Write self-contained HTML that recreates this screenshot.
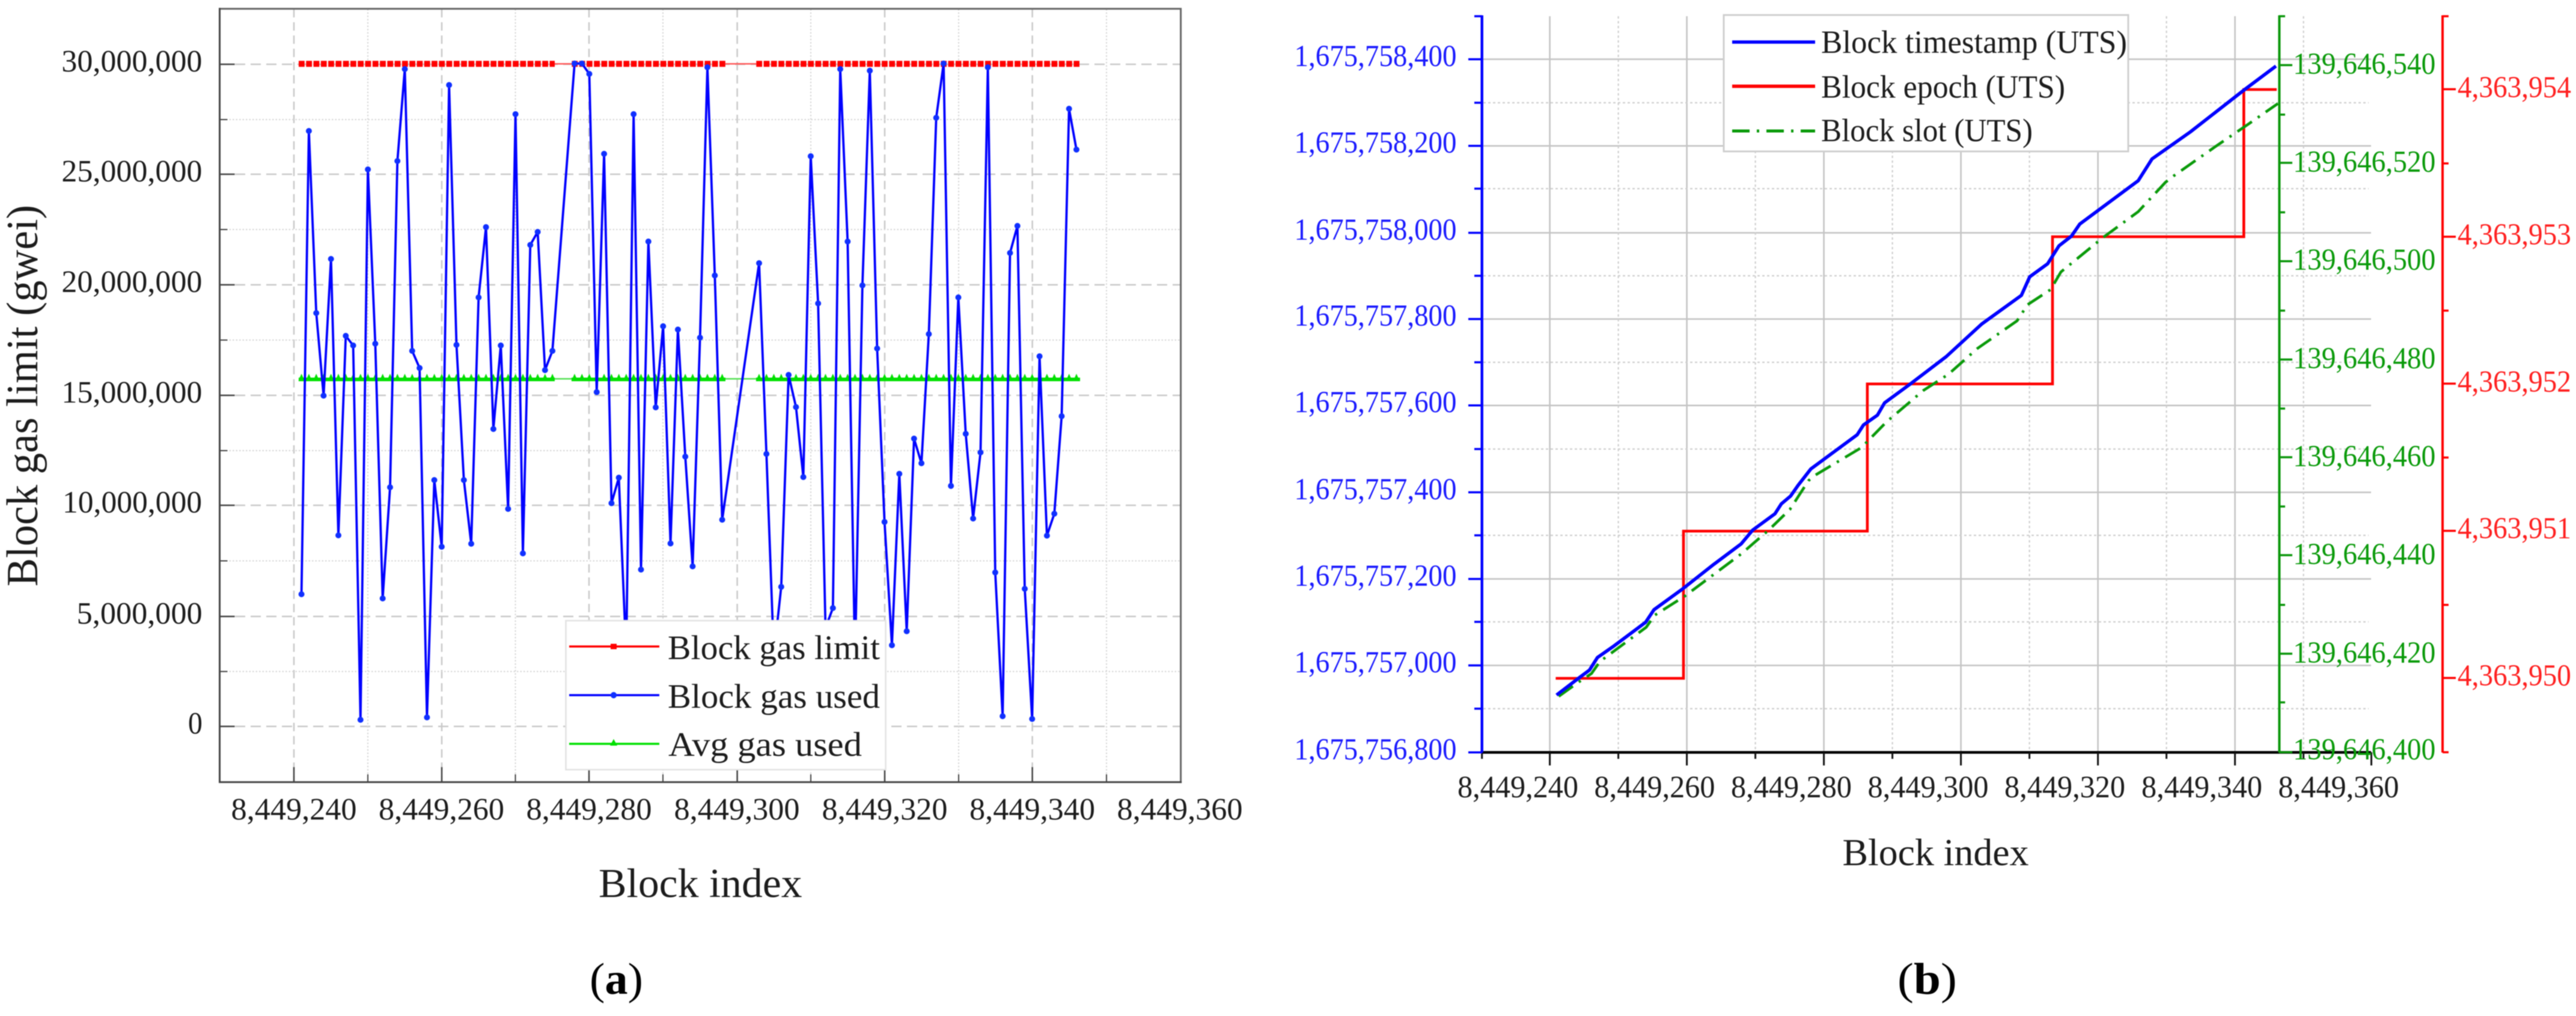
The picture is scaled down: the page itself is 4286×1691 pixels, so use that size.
<!DOCTYPE html>
<html><head><meta charset="utf-8"><title>Block charts</title>
<style>
html,body{margin:0;padding:0;background:#fff;width:4286px;height:1691px;overflow:hidden}
svg{display:block;filter:blur(.7px)}
text{font-family:"Liberation Serif",serif;fill:#1c1c1c}
.yl,.xl{font-size:52px}
.lg{font-size:57px}
.b{fill:#1a1aff;font-size:51px}
.g{fill:#0a9a0a;font-size:51px}
.r{fill:#ff2020;font-size:51px}
.xr{font-size:52px}
.lr{font-size:54px}
</style></head><body>
<svg xmlns="http://www.w3.org/2000/svg" width="4286" height="1691" viewBox="0 0 4286 1691">
<defs>
<marker id="d" markerWidth="12" markerHeight="12" refX="6" refY="6" markerUnits="userSpaceOnUse"><circle cx="6" cy="6" r="5" fill="#1030ff"/></marker>
<pattern id="tri" patternUnits="userSpaceOnUse" x="495.46" y="622" width="12.28" height="12"><polygon points="6.14,0 11.5,12 0.8,12" fill="#00e000"/></pattern>
</defs>

<!-- LEFT PLOT grid -->
<g stroke="#c9c9c9" stroke-width="2.5" stroke-dasharray="17 9" fill="none">
<path d="M365 107H1964M365 290H1964M365 474H1964M365 658H1964M365 841H1964M365 1026H1964M365 1209H1964"/>
</g>
<g stroke="#c9c9c9" stroke-width="2.5" stroke-dasharray="14 8" fill="none">
<path d="M489 15V1301M735 15V1301M980 15V1301M1226.6 15V1301M1472 15V1301M1717.6 15V1301"/>
</g>
<g stroke="#d6d6d6" stroke-width="2" stroke-dasharray="2.5 3" fill="none">
<path d="M365 199H1964M365 382H1964M365 566H1964M365 750H1964M365 933.5H1964M365 1117.6H1964"/>
<path d="M612 15V1301M857.5 15V1301M1103 15V1301M1349 15V1301M1595 15V1301M1841 15V1301"/>
</g>
<!-- frame -->
<g fill="none" stroke-linecap="square">
<path d="M365.5 14.6H1964.6V1301.7" stroke="#666" stroke-width="3"/>
<path d="M365.5 14.6V1301.7H1964.6" stroke="#444" stroke-width="3"/>
<path d="M365.5 107h25M365.5 290h25M365.5 474h25M365.5 658h25M365.5 841h25M365.5 1026h25M365.5 1209h25M489 1301.7v-25M735 1301.7v-25M980 1301.7v-25M1226.6 1301.7v-25M1472 1301.7v-25M1717.6 1301.7v-25" stroke="#444" stroke-width="2.5" stroke-linecap="butt"/>
<path d="M365.5 199h13M365.5 382h13M365.5 566h13M365.5 750h13M365.5 933.5h13M365.5 1117.6h13M612 1301.7v-13M857.5 1301.7v-13M1103 1301.7v-13M1349 1301.7v-13M1595 1301.7v-13M1841 1301.7v-13" stroke="#444" stroke-width="2" stroke-linecap="butt"/>
</g>
<!-- red series -->
<path d="M923 106.3H951M1207 106.3H1258" stroke="#ff5a5a" stroke-width="2.5" fill="none"/>
<g stroke="#ff0000" stroke-width="10" fill="none" stroke-dasharray="9.8 2.48">
<path d="M497 106.3H923"/>
<path d="M951.4 106.3H1207"/>
<path d="M1258.3 106.3H1796"/>
</g>
<!-- green series -->
<path d="M923 630.5H951M1207 630.5H1258" stroke="#55e055" stroke-width="2.5" fill="none"/>
<path d="M497 631.5H923M951 631.5H1207M1258 631.5H1797" stroke="#00e000" stroke-width="6" fill="none"/>
<rect x="496.7" y="622" width="426.3" height="12" fill="url(#tri)"/>
<rect x="950.4" y="622" width="256.6" height="12" fill="url(#tri)"/>
<rect x="1257" y="622" width="540" height="12" fill="url(#tri)"/>
<!-- blue series -->
<polyline fill="none" stroke="#0000ff" stroke-width="3.8" stroke-linejoin="round" marker-start="url(#d)" marker-mid="url(#d)" marker-end="url(#d)" points="501.6,989 513.9,218 526.2,521 538.4,658.5 550.7,431 563,891 575.3,559 587.6,575 599.8,1198 612.1,282 624.4,572 636.7,996 649,811 661.2,268 673.5,115 685.8,584 698.1,612.5 710.4,1194 722.6,799 734.9,910 747.2,141.5 759.5,574 771.8,799 784,905 796.3,495 808.6,378 820.9,714 833.2,575 845.4,847 857.7,190 870,921 882.3,407.6 894.6,386 906.8,616 919.1,584 956,105.7 968.2,105.7 980.5,123 992.8,652.6 1005.1,256 1017.4,837.5 1029.6,795 1041.9,1090 1054.2,190 1066.5,948 1078.8,402 1091,678 1103.3,543 1115.6,904.5 1127.9,548.5 1140.2,760 1152.4,942.6 1164.7,562 1177,112 1189.3,458.5 1201.6,865 1263,438 1275.2,755.5 1287.5,1090 1299.8,976.7 1312.1,624 1324.4,677.5 1336.6,794 1348.9,260 1361.2,505 1373.5,1045 1385.8,1012 1398,115 1410.3,402 1422.6,1100 1434.9,475 1447.2,117.6 1459.4,580 1471.7,868.7 1484,1073.9 1496.3,788.6 1508.6,1050.6 1520.8,730 1533.1,771 1545.4,556 1557.7,196 1570,105.7 1582.2,808.7 1594.5,495 1606.8,722 1619.1,863 1631.4,753 1643.6,112 1655.9,952.8 1668.2,1192 1680.5,421 1692.8,376 1705,980 1717.3,1196.6 1729.6,593 1741.9,891.5 1754.2,855 1766.4,692.7 1778.7,181 1791,249"/>
<!-- left legend -->
<rect x="941.5" y="1033" width="532" height="248" fill="#fff" stroke="#e2e2e2" stroke-width="2.5"/>
<path d="M947 1076H1097" stroke="#ff0000" stroke-width="3.5"/><rect x="1016" y="1071.5" width="10" height="9" fill="#ff0000"/>
<path d="M947 1157H1097" stroke="#0000ff" stroke-width="3.5"/><circle cx="1021" cy="1157" r="5.2" fill="#1030ff"/>
<path d="M947 1238H1097" stroke="#00e000" stroke-width="3.5"/><polygon points="1021,1230 1027,1241 1015,1241" fill="#00e000"/>
<text class="lg" x="1111" y="1097" textLength="353" lengthAdjust="spacingAndGlyphs">Block gas limit</text>
<text class="lg" x="1111" y="1178" textLength="353" lengthAdjust="spacingAndGlyphs">Block gas used</text>
<text class="lg" x="1112" y="1258" textLength="322" lengthAdjust="spacingAndGlyphs">Avg gas used</text>
<!-- left labels -->
<text class="yl" x="102.4" y="119" textLength="234" lengthAdjust="spacingAndGlyphs">30,000,000</text>
<text class="yl" x="102.4" y="302" textLength="234" lengthAdjust="spacingAndGlyphs">25,000,000</text>
<text class="yl" x="102.4" y="486" textLength="234" lengthAdjust="spacingAndGlyphs">20,000,000</text>
<text class="yl" x="102.4" y="670" textLength="234" lengthAdjust="spacingAndGlyphs">15,000,000</text>
<text class="yl" x="104" y="853" textLength="232" lengthAdjust="spacingAndGlyphs">10,000,000</text>
<text class="yl" x="127.7" y="1038" textLength="209" lengthAdjust="spacingAndGlyphs">5,000,000</text>
<text class="yl" x="312.9" y="1221" textLength="24" lengthAdjust="spacingAndGlyphs">0</text>
<text class="xl" x="384.5" y="1364" textLength="209" lengthAdjust="spacingAndGlyphs">8,449,240</text>
<text class="xl" x="630" y="1364" textLength="209" lengthAdjust="spacingAndGlyphs">8,449,260</text>
<text class="xl" x="875.5" y="1364" textLength="209" lengthAdjust="spacingAndGlyphs">8,449,280</text>
<text class="xl" x="1121.5" y="1364" textLength="209" lengthAdjust="spacingAndGlyphs">8,449,300</text>
<text class="xl" x="1367.5" y="1364" textLength="209" lengthAdjust="spacingAndGlyphs">8,449,320</text>
<text class="xl" x="1613" y="1364" textLength="209" lengthAdjust="spacingAndGlyphs">8,449,340</text>
<text class="xl" x="1858.5" y="1364" textLength="209" lengthAdjust="spacingAndGlyphs">8,449,360</text>
<text x="996" y="1493" font-size="69" textLength="338.6" lengthAdjust="spacingAndGlyphs">Block index</text>
<text transform="translate(62 976) rotate(-90)" font-size="74" textLength="635" lengthAdjust="spacingAndGlyphs">Block gas limit (gwei)</text>
<text x="981" y="1654" font-size="74" textLength="89" lengthAdjust="spacingAndGlyphs" style="fill:#000">(<tspan font-weight="bold" style="fill:#000">a</tspan>)</text>

<!-- RIGHT PLOT grid -->
<g stroke="#c4c4c4" stroke-width="2.6" fill="none">
<path d="M2466 98.6H3945M2466 242.8H3945M2466 387.5H3945M2466 531H3945M2466 674.8H3945M2466 819.4H3945M2466 963.6H3945M2466 1107.5H3945"/>
<path d="M2578.6 27V1252M2806.6 27V1252M3034.6 27V1252M3262.6 27V1252M3490.6 27V1252M3718.6 27V1252"/>
</g>
<g stroke="#cfcfcf" stroke-width="2.2" stroke-dasharray="4 4" fill="none">
<path d="M2468 171H3941M2468 314H3941M2468 459H3941M2468 603H3941M2468 747.4H3941M2468 891H3941M2468 1035H3941M2468 1179.5H3941"/>
<path d="M2692.6 27V1252M2920.6 27V1252M3148.6 27V1252M3376.6 27V1252M3604.6 27V1252M3832.6 27V1252"/>
</g>
<!-- black x axis -->
<path d="M2465 1252.3H3945" stroke="#000" stroke-width="4.5"/>
<path d="M2578.6 1252v22M2806.6 1252v22M3034.6 1252v22M3262.6 1252v22M3490.6 1252v22M3718.6 1252v22M3945.5 1252v22" stroke="#111" stroke-width="3"/>
<path d="M2465.7 1252v11M2692.6 1252v11M2920.6 1252v11M3148.6 1252v11M3376.6 1252v11M3604.6 1252v11M3832.6 1252v11" stroke="#111" stroke-width="3"/>
<!-- blue axis -->
<path d="M2465.7 25.5V1252.5" stroke="#0000ff" stroke-width="4.5" fill="none"/>
<path d="M2443 98.6h23M2443 242.8h23M2443 387.5h23M2443 531h23M2443 674.8h23M2443 819.4h23M2443 963.6h23M2443 1107.5h23M2443 1252.3h23" stroke="#0000ff" stroke-width="3.5"/>
<path d="M2453 27h13M2453 171h13M2453 314h13M2453 459h13M2453 603h13M2453 747.4h13M2453 891h13M2453 1035h13M2453 1179.5h13" stroke="#0000ff" stroke-width="3.5"/>
<!-- green axis -->
<path d="M3792.4 25.5V1252.5" stroke="#0a960a" stroke-width="4" fill="none"/>
<path d="M3792 108.4h22M3792 271h22M3792 434.7h22M3792 598.4h22M3792 761h22M3792 924h22M3792 1088h22M3792 1252h22" stroke="#0a960a" stroke-width="3.5"/>
<path d="M3792 27h10M3792 190.8h10M3792 353.4h10M3792 517h10M3792 680h10M3792 843h10M3792 1006.8h10M3792 1169h10" stroke="#0a960a" stroke-width="3.5"/>
<!-- red axis -->
<path d="M4064 25.5V1252.5" stroke="#ff0000" stroke-width="4" fill="none"/>
<path d="M4064 148.5h22M4064 394h22M4064 638.5h22M4064 883.5h22M4064 1128.4h22" stroke="#ff0000" stroke-width="3.5"/>
<path d="M4064 27h10M4064 272h10M4064 517h10M4064 761.5h10M4064 1006.8h10M4064 1252h10" stroke="#ff0000" stroke-width="3.5"/>
<!-- curves -->
<polyline fill="none" stroke="#ff0000" stroke-width="4.6" points="2588.4,1129 2801,1129 2801,884 3106.9,884 3106.9,639 3415,639 3415,394 3733.3,394 3733.3,149 3788,149"/>
<polyline fill="none" stroke="#0a9a0a" stroke-width="4.6" stroke-dasharray="29 12 4 12" points="2593.4,1159 2627,1135 2648,1121 2662,1101 2739,1044 2753,1024 2802,993 2851.5,956 2897,922 2943,882 2978,848 3009,800 3020,791 3097,745 3139,702 3200,650 3241.7,623 3290,580 3356,534 3373.6,507 3411.8,482 3429,452.6 3498.6,395.7 3557.6,352.3 3602.8,303.5 3616.7,292.7 3686,244 3741.7,206 3790,172.4"/>
<polyline fill="none" stroke="#0000ff" stroke-width="5.6" stroke-linejoin="round" points="2589.8,1156.8 2627,1128.4 2644.6,1115.3 2657.9,1094.3 2683.1,1076.7 2711.2,1055.7 2737.9,1035.8 2751.9,1014.8 2798.9,980.7 2851.5,939.2 2897.1,905.1 2916,882.4 2953.2,855.1 2963.8,838.6 2979.2,825.6 2991.8,807.6 3012.9,780.5 3090,723.6 3100.5,707.3 3123.7,691 3135.6,670.5 3177.7,639.6 3238.2,593.5 3297.2,539.3 3363.2,491.6 3377.1,460.7 3406.9,439 3425.7,409.2 3446.5,393 3460.4,372.9 3557.6,300.8 3580.6,264.5 3644.4,219.5 3734.7,149 3786.8,110"/>
<!-- right legend -->
<rect x="2868" y="25" width="673" height="227" fill="#fff" stroke="#cfcfcf" stroke-width="3"/>
<path d="M2882 70H3020" stroke="#0000ff" stroke-width="5.6"/>
<path d="M2882 143.6H3020" stroke="#ff0000" stroke-width="5.6"/>
<path d="M2882 218H3020" stroke="#0a9a0a" stroke-width="5" stroke-dasharray="29 12 4 12"/>
<text class="lr" x="3030" y="88" textLength="509" lengthAdjust="spacingAndGlyphs">Block timestamp (UTS)</text>
<text class="lr" x="3030" y="162.6" textLength="406" lengthAdjust="spacingAndGlyphs">Block epoch (UTS)</text>
<text class="lr" x="3030" y="235" textLength="352" lengthAdjust="spacingAndGlyphs">Block slot (UTS)</text>
<!-- right labels -->
<text class="b" x="2153.5" y="110" textLength="270" lengthAdjust="spacingAndGlyphs">1,675,758,400</text>
<text class="b" x="2153.5" y="254" textLength="270" lengthAdjust="spacingAndGlyphs">1,675,758,200</text>
<text class="b" x="2153.5" y="399" textLength="270" lengthAdjust="spacingAndGlyphs">1,675,758,000</text>
<text class="b" x="2153.5" y="542" textLength="270" lengthAdjust="spacingAndGlyphs">1,675,757,800</text>
<text class="b" x="2153.5" y="686" textLength="270" lengthAdjust="spacingAndGlyphs">1,675,757,600</text>
<text class="b" x="2153.5" y="831" textLength="270" lengthAdjust="spacingAndGlyphs">1,675,757,400</text>
<text class="b" x="2153.5" y="975" textLength="270" lengthAdjust="spacingAndGlyphs">1,675,757,200</text>
<text class="b" x="2153.5" y="1119" textLength="270" lengthAdjust="spacingAndGlyphs">1,675,757,000</text>
<text class="b" x="2153.5" y="1264" textLength="270" lengthAdjust="spacingAndGlyphs">1,675,756,800</text>
<text class="g" x="3815.3" y="123" textLength="237" lengthAdjust="spacingAndGlyphs">139,646,540</text>
<text class="g" x="3815.3" y="286" textLength="237" lengthAdjust="spacingAndGlyphs">139,646,520</text>
<text class="g" x="3815.3" y="449" textLength="237" lengthAdjust="spacingAndGlyphs">139,646,500</text>
<text class="g" x="3815.3" y="613" textLength="237" lengthAdjust="spacingAndGlyphs">139,646,480</text>
<text class="g" x="3815.3" y="776" textLength="237" lengthAdjust="spacingAndGlyphs">139,646,460</text>
<text class="g" x="3815.3" y="939" textLength="237" lengthAdjust="spacingAndGlyphs">139,646,440</text>
<text class="g" x="3815.3" y="1103" textLength="237" lengthAdjust="spacingAndGlyphs">139,646,420</text>
<text class="g" x="3815.3" y="1264" textLength="237" lengthAdjust="spacingAndGlyphs">139,646,400</text>
<text class="r" x="4088.9" y="162" textLength="189" lengthAdjust="spacingAndGlyphs">4,363,954</text>
<text class="r" x="4088.9" y="407" textLength="189" lengthAdjust="spacingAndGlyphs">4,363,953</text>
<text class="r" x="4088.9" y="652" textLength="189" lengthAdjust="spacingAndGlyphs">4,363,952</text>
<text class="r" x="4088.9" y="896" textLength="189" lengthAdjust="spacingAndGlyphs">4,363,951</text>
<text class="r" x="4088.9" y="1141" textLength="189" lengthAdjust="spacingAndGlyphs">4,363,950</text>
<text class="xr" x="2425" y="1327" textLength="201" lengthAdjust="spacingAndGlyphs">8,449,240</text>
<text class="xr" x="2652.5" y="1327" textLength="201" lengthAdjust="spacingAndGlyphs">8,449,260</text>
<text class="xr" x="2880" y="1327" textLength="201" lengthAdjust="spacingAndGlyphs">8,449,280</text>
<text class="xr" x="3107.5" y="1327" textLength="201" lengthAdjust="spacingAndGlyphs">8,449,300</text>
<text class="xr" x="3335" y="1327" textLength="201" lengthAdjust="spacingAndGlyphs">8,449,320</text>
<text class="xr" x="3563" y="1327" textLength="201" lengthAdjust="spacingAndGlyphs">8,449,340</text>
<text class="xr" x="3790.5" y="1327" textLength="201" lengthAdjust="spacingAndGlyphs">8,449,360</text>
<text x="3065.5" y="1440" font-size="64" textLength="310" lengthAdjust="spacingAndGlyphs">Block index</text>
<text x="3157" y="1654" font-size="74" textLength="99" lengthAdjust="spacingAndGlyphs" style="fill:#000">(<tspan font-weight="bold" style="fill:#000">b</tspan>)</text>
</svg>
</body></html>
